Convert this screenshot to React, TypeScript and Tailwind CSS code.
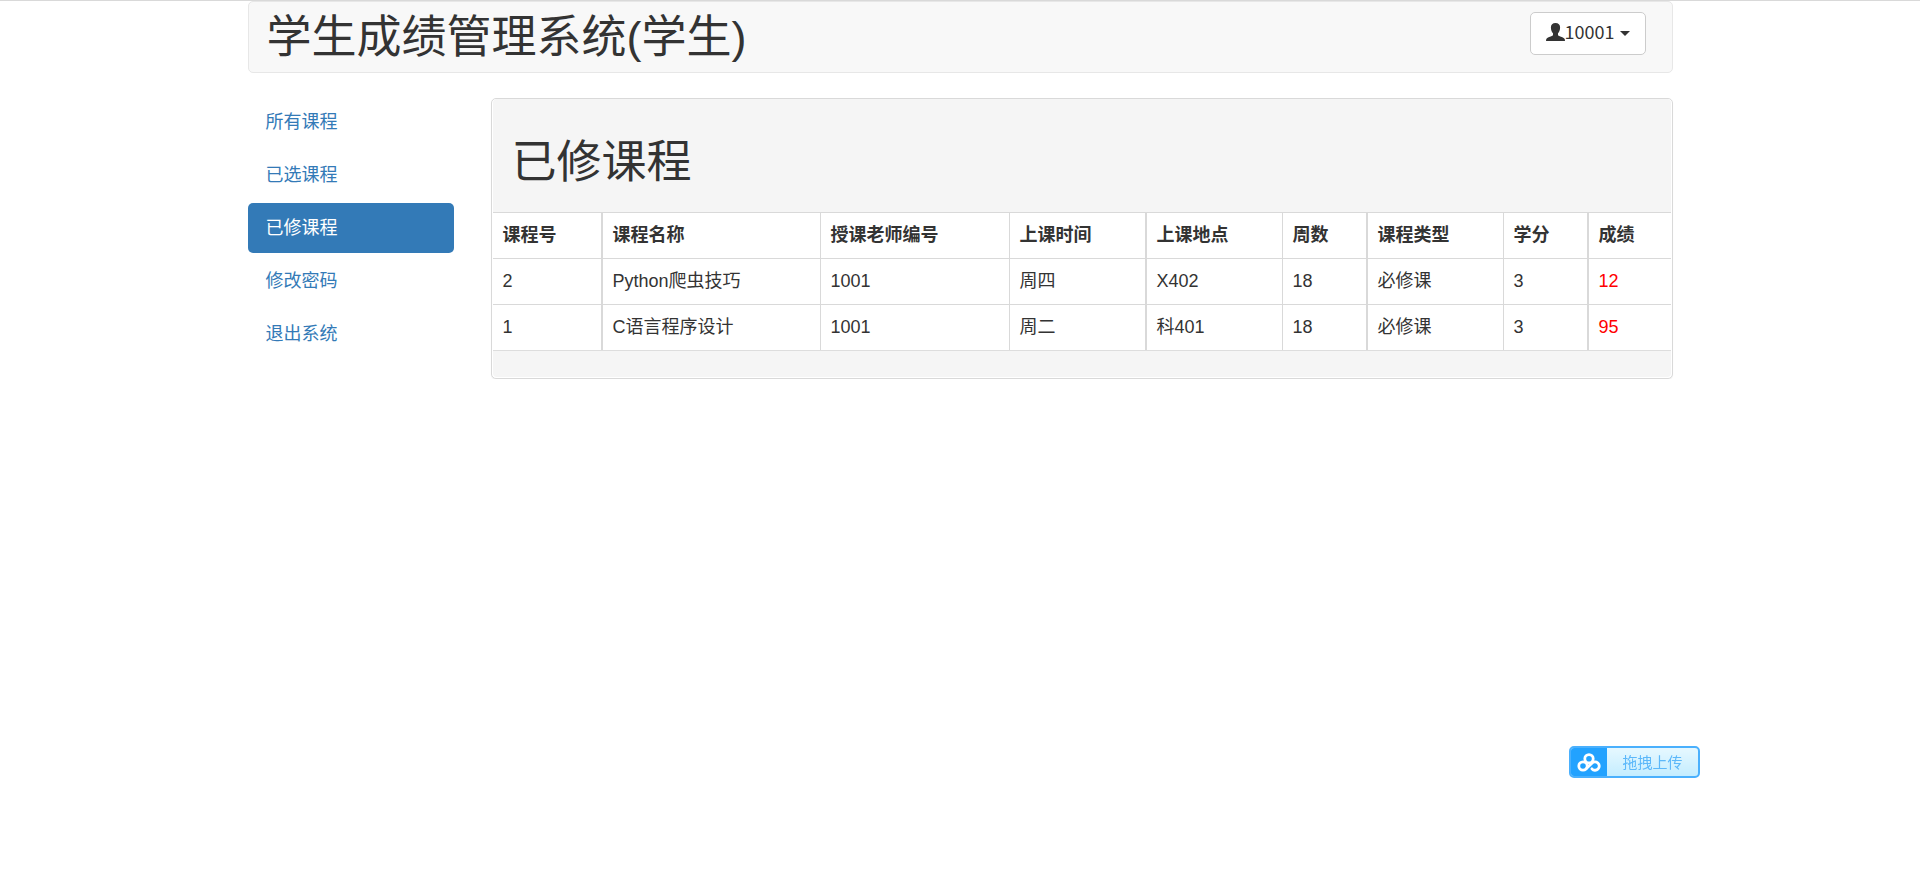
import React from "react";

const navigation = [
  { title: "所有课程", href: "#all" },
  { title: "已选课程", href: "#selected" },
  { title: "已修课程", href: "#finished" },
  { title: "修改密码", href: "#password" },
  { title: "退出系统", href: "#logout" },
];

const columns = [
  { title: "课程号", col: "w-[110px]", border: "border-r-2" },
  { title: "课程名称", col: "w-[218px]", border: "border-r" },
  { title: "授课老师编号", col: "w-[189px]", border: "border-r" },
  { title: "上课时间", col: "w-[137px]", border: "border-r-2" },
  { title: "上课地点", col: "w-[136px]", border: "border-r" },
  { title: "周数", col: "w-[85px]", border: "border-r-2" },
  { title: "课程类型", col: "w-[136px]", border: "border-r" },
  { title: "学分", col: "w-[85px]", border: "border-r-2" },
  { title: "成绩", col: "w-[82px]", border: "" },
];

const courses = [
  ["2", "Python爬虫技巧", "1001", "周四", "X402", "18", "必修课", "3", "12"],
  ["1", "C语言程序设计", "1001", "周二", "科401", "18", "必修课", "3", "95"],
];

const UserIcon = () => (
  <svg viewBox="0 0 19 18" className="h-[18px] w-[19px]" fill="currentColor" aria-hidden="true">
    <path d="M9.5 0C6.600 0 4.900 1.700 4.900 4.500C4.900 7 5.700 9 7 10.300V12.300C6.500 13.100 1.900 14.200 0.700 15.600C0.200 16.200 0 17 0 18H19C19 17 18.800 16.200 18.300 15.600C17.100 14.200 12.500 13.100 12 12.300V10.300C13.300 9 14.100 7 14.100 4.500C14.100 1.700 12.400 0 9.500 0Z" />
  </svg>
);

const CloudIcon = () => (
  <svg viewBox="0 0 24 19" className="h-[19px] w-6" fill="none" stroke="#fff" strokeWidth="2.8" strokeLinecap="round" aria-hidden="true">
    <circle cx="12" cy="5.800" r="4.200" />
    <circle cx="6" cy="13" r="4.200" />
    <path d="M9.200 15.800L14.800 10.400A4.200 4.200 0 1 1 14.900 15.800" />
  </svg>
);

const Header = () => (
  <header className="flex items-start justify-between rounded-[5px] border border-[#e7e7e7] bg-[#f8f8f8] pb-2 pl-[18px] pr-[26px] pt-[10px]">
    <h1 className="text-[45px] leading-[52px]">学生成绩管理系统(学生)</h1>
    <button
      type="button"
      className="flex h-[43px] items-center rounded-[5px] border border-[#ccc] bg-white px-[15px] pb-1 font-['Noto_Sans_CJK_SC',sans-serif] text-[18px] leading-[25px]"
    >
      <UserIcon />
      10001
      <span className="ml-[5px] mt-1 border-x-[5px] border-t-[5px] border-x-transparent border-t-[#333]" />
    </button>
  </header>
);

const Sidebar = () => (
  <nav className="flex w-[206px] shrink-0 flex-col gap-[3px] pt-6">
    {navigation.map((item) => (
      <a
        key={item.title}
        href={item.href}
        className={`flex h-[50px] items-center rounded-[5px] px-[18px] ${
          item.title === "已修课程" ? "bg-[#337ab7] text-white" : "text-[#337ab7]"
        }`}
      >
        {item.title}
      </a>
    ))}
  </nav>
);

const CoursePanel = () => (
  <main className="min-w-0 flex-1 pt-[25px]">
    <div className="rounded-[5px] border border-[#d9d9d9] bg-white px-px pb-px shadow-[0_1px_1px_rgba(0,0,0,0.05)]">
      <div className="rounded-[4px] bg-[#f5f5f5] pb-[26px]">
        <h2 className="px-[19px] pb-6 pt-[39px] text-[45px] leading-[50px]">已修课程</h2>
        <table className="w-full table-fixed border-separate border-spacing-0 border-b border-[#ddd] bg-white text-left">
          <colgroup>
            {columns.map((column) => (
              <col key={column.title} className={column.col} />
            ))}
          </colgroup>
          <thead>
            <tr>
              {columns.map((column) => (
                <th key={column.title} scope="col" className={`border-t border-[#d9d9d9] p-[10px] font-bold ${column.border}`}>
                  {column.title}
                </th>
              ))}
            </tr>
          </thead>
          <tbody>
            {courses.map((course) => (
              <tr key={course[0]}>
                {course.map((value, i) => (
                  <td
                    key={columns[i].title}
                    className={`border-t border-[#d9d9d9] p-[10px] ${columns[i].border} ${i === 8 ? "text-[#f00]" : ""}`}
                  >
                    {value}
                  </td>
                ))}
              </tr>
            ))}
          </tbody>
        </table>
      </div>
    </div>
  </main>
);

const App = () => {
  return (
    <div className="border-t border-[#d9d9d9] font-['Liberation_Sans','Noto_Sans_CJK_SC',sans-serif] text-[18px] leading-[25px] text-[#333]">
      <div className="mx-auto max-w-[1425px]">
        <Header />
        <div className="flex gap-[37px]">
          <Sidebar />
          <CoursePanel />
        </div>
      </div>

      {/* Floating upload button */}
      <button
        type="button"
        className="fixed bottom-[94px] right-[220px] flex h-8 w-[131px] overflow-hidden rounded-[5px] border-2 border-[#4ab0fd] bg-linear-to-b from-[#e6f8ff] to-[#c4edff] text-[15px] text-[#5cb8fa]"
      >
        <span className="flex h-full w-9 items-center justify-center bg-[#22a2ff]">
          <CloudIcon />
        </span>
        <span className="flex h-full flex-1 items-center justify-center">拖拽上传</span>
      </button>
    </div>
  );
};

export default App;
